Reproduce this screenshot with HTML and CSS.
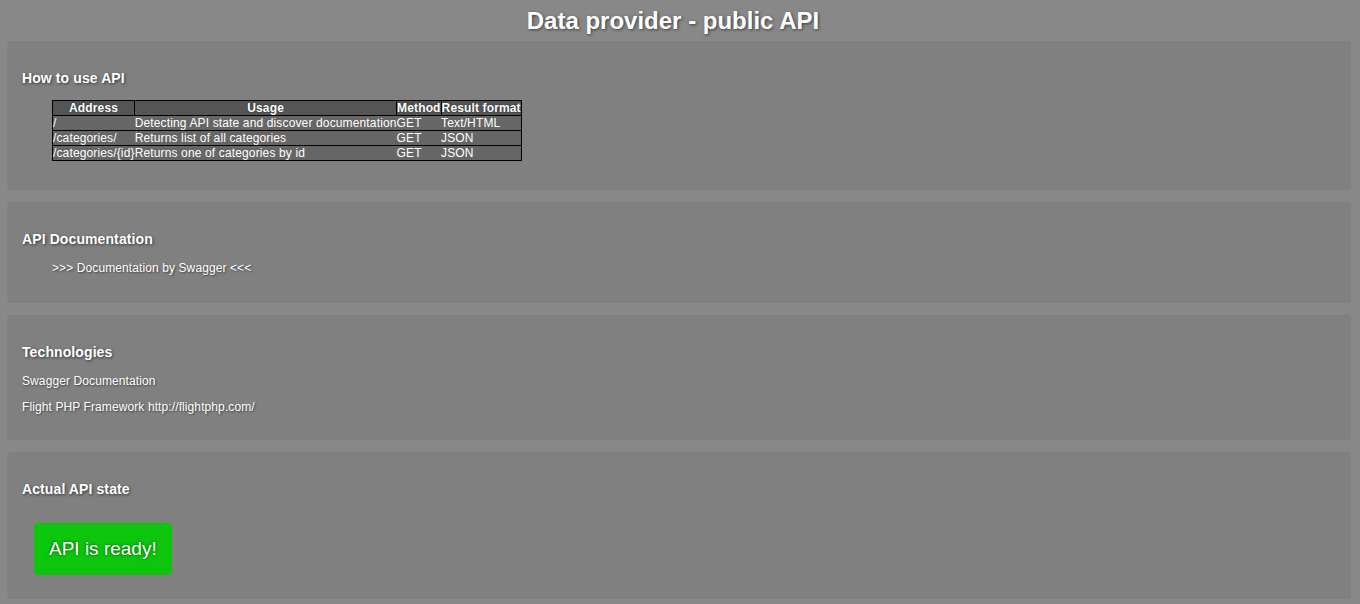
FILE: index.html
```html
<!DOCTYPE html>
<html>
<head>
<meta charset="utf-8">
<title>Data provider - public API</title>
<link rel="stylesheet" href="styles.css">
</head>
<body>
<h1 class="title">Data provider - public API</h1>

<section class="card">
  <h4 class="card-title">How to use API</h4>
  <table class="api-table">
    <thead>
      <tr><th>Address</th><th>Usage</th><th>Method</th><th>Result format</th></tr>
    </thead>
    <tbody>
      <tr><td>/</td><td>Detecting API state and discover documentation</td><td>GET</td><td>Text/HTML</td></tr>
      <tr><td>/categories/</td><td>Returns list of all categories</td><td>GET</td><td>JSON</td></tr>
      <tr><td>/categories/{id}</td><td>Returns one of categories by id</td><td>GET</td><td>JSON</td></tr>
    </tbody>
  </table>
</section>

<section class="card">
  <h4 class="card-title">API Documentation</h4>
  <p class="doc-link"><a href="#">&gt;&gt;&gt; Documentation by Swagger &lt;&lt;&lt;</a></p>
</section>

<section class="card">
  <h4 class="card-title">Technologies</h4>
  <p class="text">Swagger Documentation</p>
  <p class="text last">Flight PHP Framework http://flightphp.com/</p>
</section>

<section class="card">
  <h4 class="card-title">Actual API state</h4>
  <div class="state-ready">API is ready!</div>
</section>
</body>
</html>
```

FILE: styles.css
```css
html, body {
  margin: 0;
  padding: 0;
}

body {
  background: #888888;
  font-family: "Liberation Sans", Arial, sans-serif;
  font-size: 12px;
  color: #ffffff;
  padding: 0 9px 0 7px;
  height: 604px;
  overflow: hidden;
}

.title {
  margin: 0;
  padding: 7px 12px 0 0;
  font-size: 24px;
  line-height: 28px;
  font-weight: bold;
  text-align: center;
  text-shadow: 1px 1px 3px rgba(0, 0, 0, 0.55);
  margin-bottom: 6px;
}

.card {
  background: #808080;
  border-radius: 4px;
  padding: 15px;
  margin-bottom: 12px;
}

.card-title {
  margin: 14px 0;
  font-size: 14px;
  line-height: 16px;
  font-weight: bold;
  letter-spacing: 0.1px;
  text-shadow: 1px 1px 3px rgba(0, 0, 0, 0.6);
}

.api-table {
  margin: 0 0 14px 30px;
  border-collapse: collapse;
  border: 1px solid #000;
  font-size: 12px;
  line-height: 14px;
  letter-spacing: 0.14px;
}

.api-table th {
  background: #555555;
  border: 1px solid #000;
  padding: 0;
  font-weight: bold;
  text-align: center;
  text-shadow: 0 0 2px rgba(0, 0, 0, 0.5);
}

.api-table td {
  background: #666666;
  padding: 0;
  text-align: left;
  white-space: nowrap;
}

.api-table tbody tr {
  border-top: 1px solid #000;
}

.doc-link {
  margin: 0 0 13px 30px;
  line-height: 14px;
  letter-spacing: 0.1px;
}

.doc-link a {
  color: #ffffff;
  text-decoration: none;
  text-shadow: 1px 1px 2px rgba(0, 0, 0, 0.5);
}

.text {
  margin: 0 0 12px 0;
  line-height: 14px;
  letter-spacing: 0.1px;
  text-shadow: 1px 1px 2px rgba(0, 0, 0, 0.5);
}

.text.last {
  margin-bottom: 11px;
}

.state-ready {
  display: inline-block;
  margin: 12px 0 9px 12px;
  padding: 15px;
  background: #0cc50c;
  border-radius: 4px;
  font-size: 19px;
  line-height: 22px;
  text-shadow: 0 0 3px rgba(0, 0, 0, 0.6);
}
```
